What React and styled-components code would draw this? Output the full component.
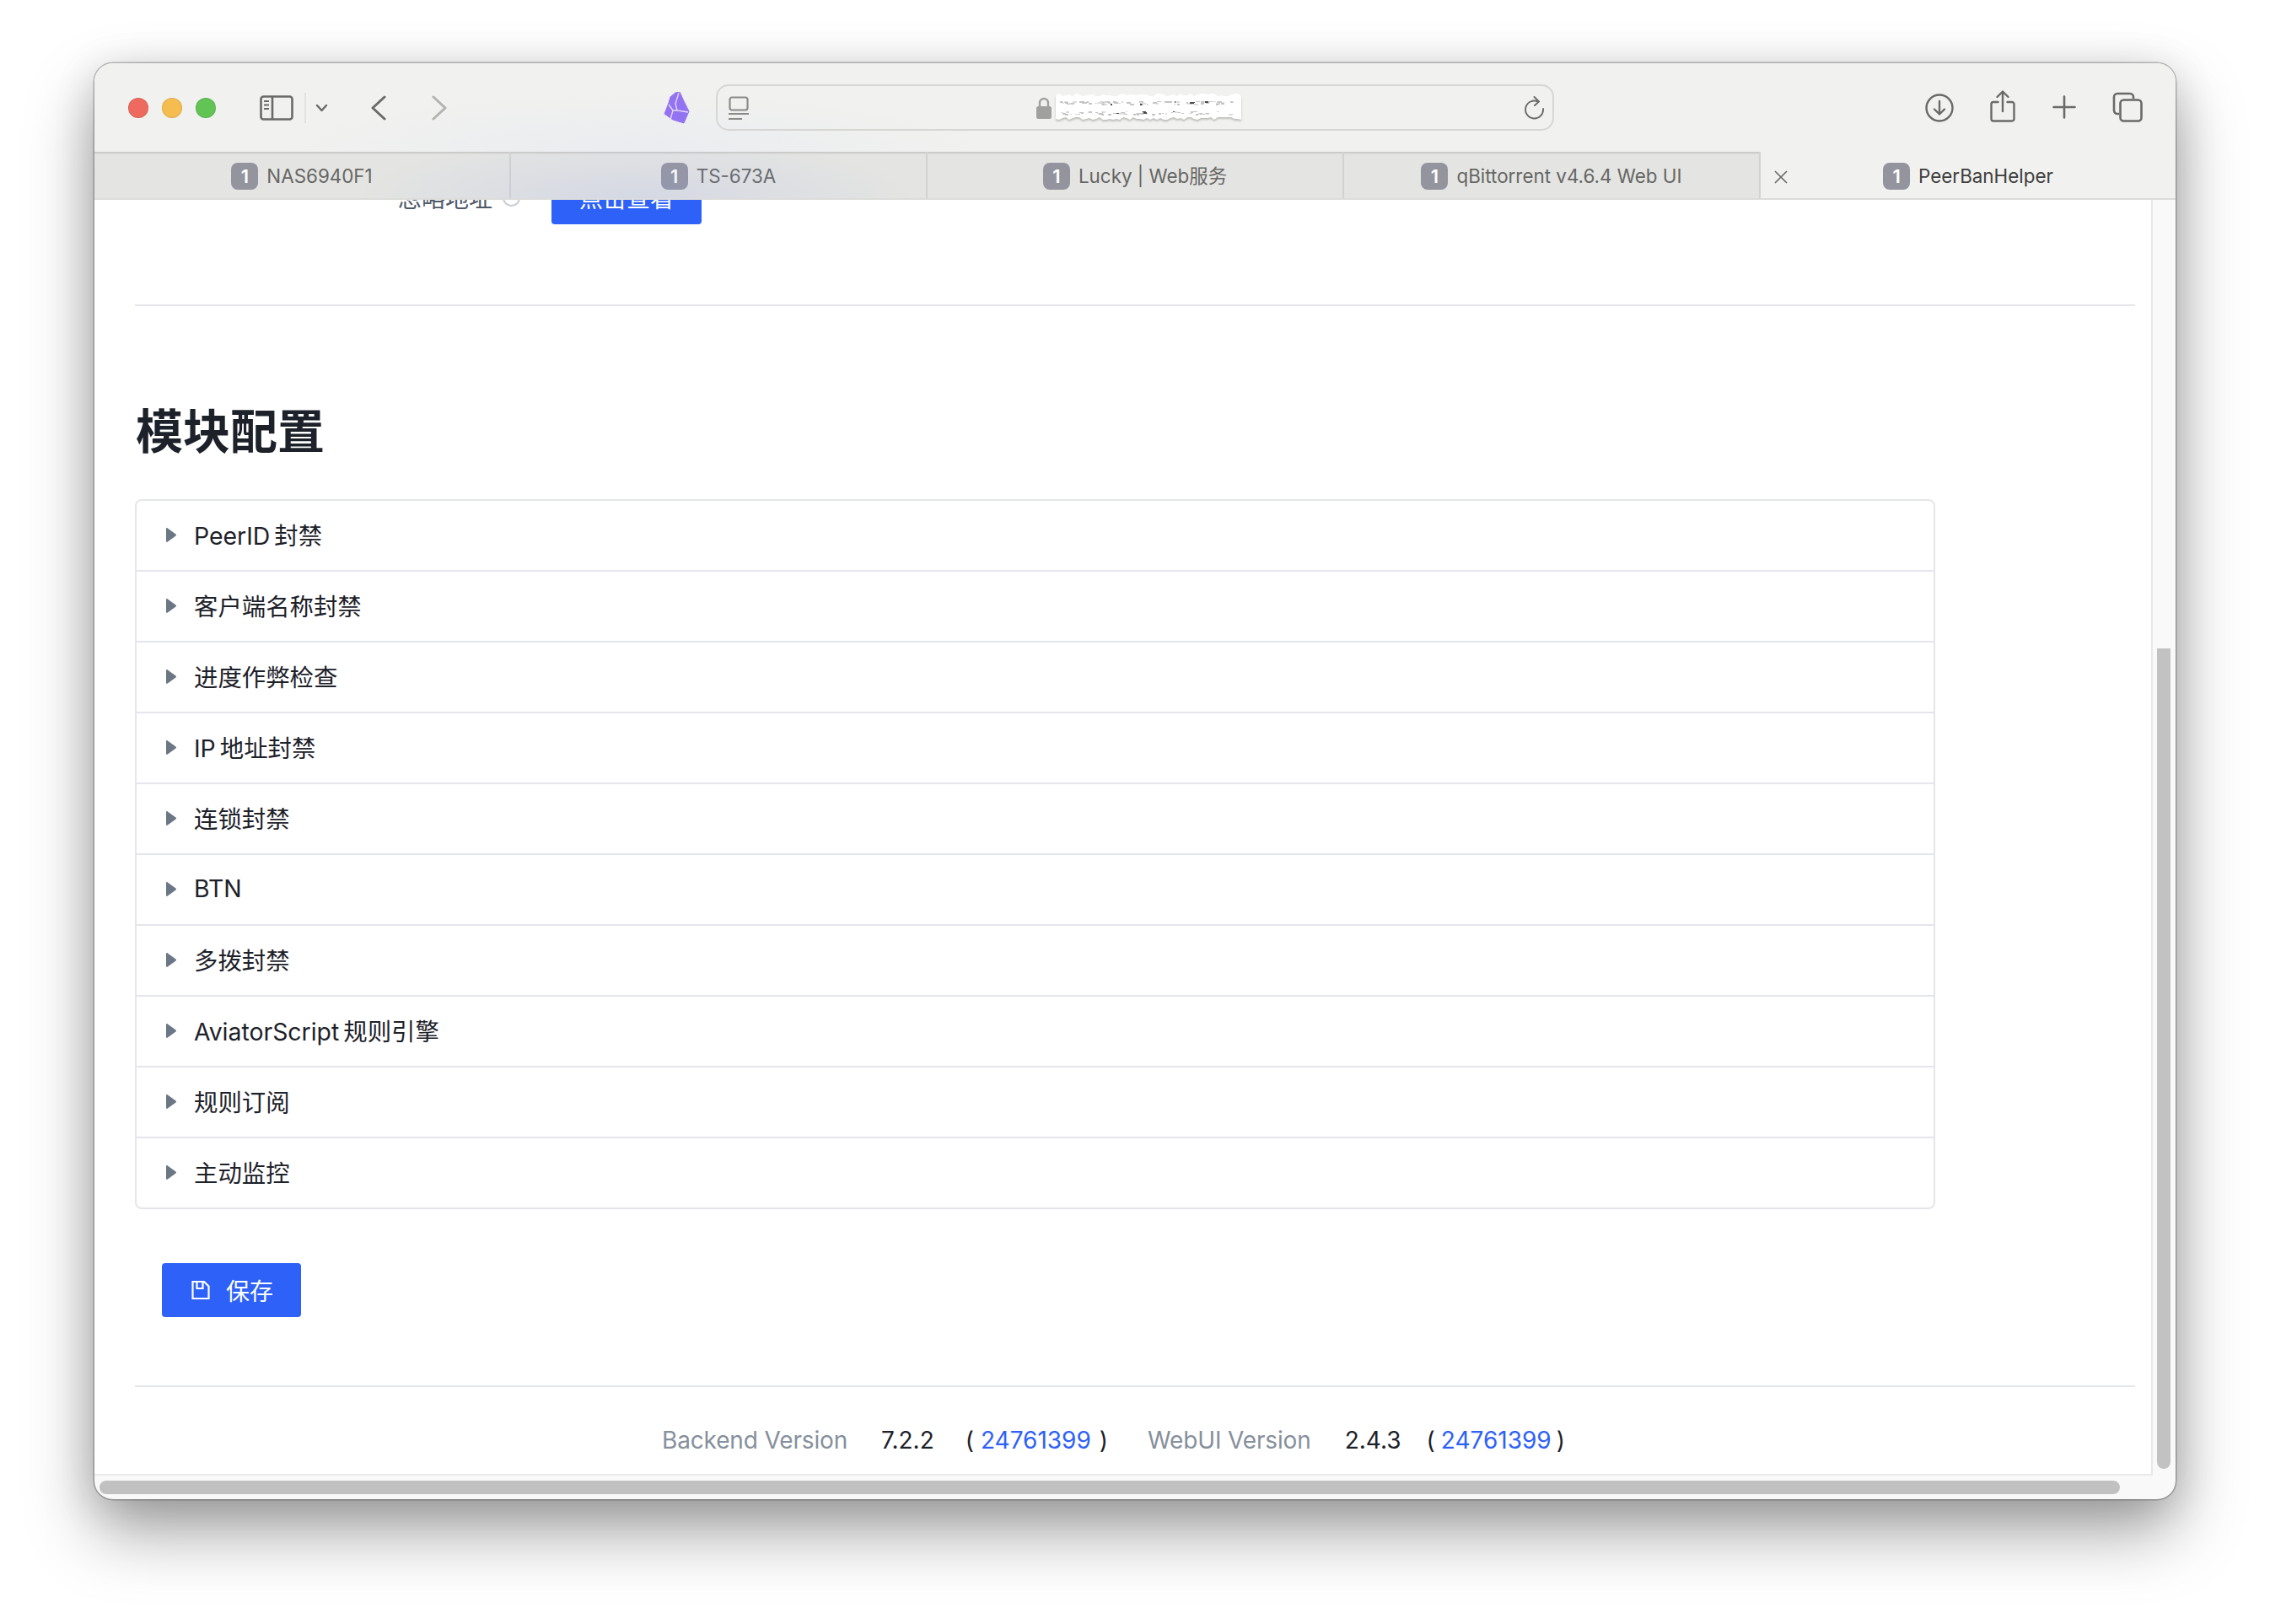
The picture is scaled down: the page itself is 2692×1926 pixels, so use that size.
import React from "react";
import styled, { createGlobalStyle } from "styled-components";

const GlobalStyle = createGlobalStyle`
  html, body {
    margin: 0;
    padding: 0;
    width: 2692px;
    height: 1926px;
    overflow: hidden;
    background: #fff;
  }
  * {
    box-sizing: border-box;
  }
`;

const FONT = `Inter, "Noto Sans CJK SC", sans-serif`;
const BLUE = "#2d61f8";
const ICON = "#6a6a68";

const Page = styled.div`
  width: 2692px;
  height: 1926px;
  padding: 75px 0 0 112px;
  font-family: ${FONT};
`;

const Window = styled.div`
  width: 2468px;
  height: 1703px;
  display: flex;
  flex-direction: column;
  border-radius: 22px;
  overflow: hidden;
  background: #f9f9f9;
  box-shadow: 0 0 0 1.5px rgba(0, 0, 0, 0.24), 0 38px 80px rgba(0, 0, 0, 0.36),
    0 8px 50px rgba(0, 0, 0, 0.14);
`;

// toolbar
const Toolbar = styled.div`
  height: 105px;
  flex: none;
  display: flex;
  align-items: center;
  padding-left: 40px;
  background: radial-gradient(ellipse 420px 70px at 640px 105px, #eaecf0, #f1f1ef00),
    #f1f1ef;
`;

const Lights = styled.div`
  display: flex;
  gap: 16px;
  margin-top: 1px;
`;

const Light = styled.span`
  width: 24px;
  height: 24px;
  border-radius: 50%;
  background: ${(p) => p.$color};
  box-shadow: inset 0 0 0 1px rgba(0, 0, 0, 0.1);
`;

const Tool = styled.div`
  flex: none;
  display: flex;
  margin-left: ${(p) => p.$ml || 0}px;
  margin-top: ${(p) => p.$mt || 0}px;
  svg {
    display: block;
  }
`;

const Divider = styled.div`
  width: 2px;
  height: 36px;
  margin-left: 13px;
  background: #e2e2e0;
`;

const AddressBar = styled.div`
  width: 994px;
  height: 55px;
  margin: 0 0 0 31px;
  padding: 0 9px 0 13px;
  display: flex;
  align-items: center;
  border: 2.5px solid #d6d6d4;
  border-radius: 15px;
`;

const AddressCenter = styled.div`
  margin-left: 341px;
  display: flex;
  align-items: center;
  gap: 5px;
`;

const UrlSvg = styled.svg`
  display: block;
  filter: drop-shadow(0 2px 1px rgba(0, 0, 0, 0.22));
`;

const Reload = styled.div`
  margin-left: auto;
  display: flex;
`;

// tabs
const TabBar = styled.div`
  height: 57px;
  flex: none;
  position: relative;
  display: flex;
  background: #f1f1ef;
  border-bottom: 2px solid #dcdcda;
  &::after {
    content: "";
    position: absolute;
    inset: 0;
    pointer-events: none;
    background: radial-gradient(ellipse 330px 70px at 640px 100%, rgba(150, 170, 235, 0.2), rgba(150, 170, 235, 0));
  }
`;

const Tab = styled.div`
  flex: 1 1 0;
  position: relative;
  display: flex;
  align-items: center;
  justify-content: center;
  gap: 10px;
  padding-top: 2px;
  font-size: 22.4px;
  line-height: 30px;
  color: ${(p) => (p.$active ? "#3e3e3e" : "#666664")};
  background: ${(p) => (p.$active ? "transparent" : "#e4e4e2")};
  border-right: ${(p) => (p.$active ? "none" : "2px solid #d2d2d0")};
  box-shadow: ${(p) => (p.$active ? "none" : "inset 0 3px 3px -2px rgba(0, 0, 0, 0.2)")};
`;

const Badge = styled.span`
  width: 32px;
  height: 32px;
  display: flex;
  align-items: center;
  justify-content: center;
  border-radius: 8px;
  background: #94949f;
  color: #fff;
  font-size: 22px;
  font-weight: 600;
`;

const TabClose = styled.div`
  position: absolute;
  left: 16px;
  top: 22px;
  display: flex;
`;

// page body
const Body = styled.div`
  flex: 1;
  min-height: 0;
  display: flex;
  flex-direction: column;
`;

const Upper = styled.div`
  height: 1513px;
  flex: none;
  display: flex;
`;

const Viewport = styled.div`
  width: 2441px;
  flex: none;
  overflow: hidden;
  padding: 0 19px 0 48px;
  background: #fff;
  border-right: 2px solid #e8e8e8;
  border-bottom: 2px solid #e8e8e8;
  color: #1d2129;
`;

const ClippedRow = styled.div`
  display: flex;
  align-items: center;
  margin-top: -35px;
  padding-left: 312px;
  font-size: 28px;
  color: #4e5969;
`;

const InfoDot = styled.span`
  width: 21px;
  height: 21px;
  margin: 0 36px 0 12px;
  border-radius: 50%;
  border: 2px solid #c9cdd4;
`;

const ViewButton = styled.div`
  width: 178px;
  height: 64px;
  margin-left: 1px;
  display: flex;
  align-items: center;
  justify-content: center;
  border-radius: 4px;
  background: ${BLUE};
  color: #fff;
`;

const Rule = styled.div`
  height: 2px;
  background: #e5e6eb;
  margin-top: ${(p) => p.$mt}px;
`;

const Heading = styled.h2`
  margin: 110px 0 41px 1px;
  font-size: 56px;
  line-height: 78px;
  font-weight: 700;
  color: #1d2129;
`;

const Accordion = styled.div`
  width: 2135px;
  border: 2px solid #e5e6eb;
  border-radius: 8px;
`;

const Row = styled.div`
  height: ${(p) => (p.$first ? 82 : 84)}px;
  display: flex;
  align-items: center;
  padding-left: 35px;
  font-size: 28.4px;
  word-spacing: -3px;
  color: #1d2129;
  border-top: ${(p) => (p.$first ? "none" : "2px solid #e5e6eb")};
`;

const RowLabel = styled.span`
  margin-top: -3px;
`;

const RowArrow = styled.svg`
  width: 12px;
  height: 17px;
  margin: -2px 21px 0 0;
  fill: #6b7785;
`;

const SaveButton = styled.div`
  width: 165px;
  height: 64px;
  margin: 64px 0 0 32px;
  display: flex;
  align-items: center;
  padding-left: 35px;
  gap: 19px;
  border-radius: 4px;
  background: ${BLUE};
  color: #fff;
  font-size: 28px;
`;

const Footer = styled.div`
  height: 54px;
  margin-top: 36px;
  display: flex;
  align-items: center;
  padding-left: 625px;
  font-size: 28px;
  white-space: nowrap;
`;

const FooterLabel = styled.span`
  color: #86909c;
  letter-spacing: -0.15px;
  margin-left: ${(p) => p.$ml || 0}px;
`;

const FooterValue = styled.span`
  color: #1d2129;
  margin-left: ${(p) => p.$ml || 0}px;
`;

const FooterLink = styled.span`
  color: ${BLUE};
  margin-left: ${(p) => p.$ml || 0}px;
`;

// scrollbars
const VTrack = styled.div`
  flex: 1;
  padding: 532px 0 0 5px;
`;

const VThumb = styled.div`
  width: 16px;
  height: 973px;
  border-radius: 0 0 8px 8px;
  background: #c2c2c2;
`;

const HTrack = styled.div`
  flex: 1;
  padding: 6px 0 0 6px;
`;

const HThumb = styled.div`
  width: 2396px;
  height: 16px;
  border-radius: 8px;
  background: #c1c1c1;
`;

function SidebarIcon() {
  return (
    <svg width="40" height="30" viewBox="0 0 40 30" fill="none" stroke={ICON} strokeWidth="2.6">
      <rect x="1.5" y="1.5" width="37" height="27" rx="3" />
      <path d="M15 1.5v27" />
      <path d="M5 7h6M5 11.5h6M5 16h6" strokeWidth="2" />
    </svg>
  );
}

function ObsidianLogo() {
  return (
    <svg width="31" height="38" viewBox="0 0 31 38">
      <path
        d="M14 1 19 0 24 11 30 23 27 30 24 37 11 33 1 26 6 13 8 6Z"
        fill="#9473f2"
        stroke="#9473f2"
        strokeWidth="1"
        strokeLinejoin="round"
      />
      <path
        d="M18 1 14 14 16 22 29 24M6 15 11 22 8 33M11 22 16 22"
        fill="none"
        stroke="#e4dcfb"
        strokeWidth="1.3"
      />
    </svg>
  );
}

function ReaderIcon() {
  return (
    <svg width="24" height="28" viewBox="0 0 24 28" fill="none" stroke="#8a8a88" strokeWidth="2.2">
      <rect x="1.5" y="1.5" width="21" height="15" rx="2.5" />
      <path d="M0 21h24M0 27h16" />
    </svg>
  );
}

function LockIcon() {
  return (
    <svg width="18" height="26" viewBox="0 0 18 26">
      <path d="M4 12V7a5 5 0 0 1 10 0v5" fill="none" stroke="#a0a09e" strokeWidth="2.4" />
      <rect x="0" y="11" width="18" height="15" rx="2.5" fill="#a0a09e" />
    </svg>
  );
}

// the address in the picture is smeared out, a seeded speckle stands in for it
function makeSmear() {
  let seed = 71;
  const next = (n) => {
    seed = (seed * 137 + 59) % 2039;
    return seed % n;
  };
  const top = [];
  const bottom = [];
  for (let x = 0; x <= 220; x += 4) {
    top.push(`${x},${next(4)}`);
    bottom.unshift(`${x},${28 + next(4)}`);
  }
  const dots = [];
  for (let i = 0; i < 170; i++) {
    const dark = next(11) === 0;
    dots.push({
      x: 4 + next(210),
      y: (next(2) ? 21 : 9) + next(4),
      w: 2 + next(4),
      h: 1 + next(2),
      fill: dark ? "#4a4a4a" : next(2) ? "#c4c4c4" : "#dcdcdc",
    });
  }
  return { outline: [...top, ...bottom].join(" "), dots };
}

const SMEAR = makeSmear();

function UrlSmear() {
  return (
    <UrlSvg width="221" height="34" viewBox="0 0 221 34">
      <polygon points={SMEAR.outline} fill="#fff" />
      {SMEAR.dots.map((d, i) => (
        <rect key={i} x={d.x} y={d.y} width={d.w} height={d.h} fill={d.fill} />
      ))}
    </UrlSvg>
  );
}

function ReloadIcon() {
  return (
    <svg width="24" height="28" viewBox="0 0 24 28" fill="none" stroke={ICON} strokeWidth="1.9" strokeLinecap="round">
      <path d="M16 6.5A10.5 10.5 0 1 0 22 15" />
      <path d="M11.5 1 17 6.5 12 11" />
    </svg>
  );
}

function DownloadIcon() {
  return (
    <svg width="34" height="34" viewBox="0 0 34 34" fill="none" stroke={ICON} strokeWidth="2.4" strokeLinecap="round" strokeLinejoin="round">
      <circle cx="17" cy="17" r="15.5" />
      <path d="M17 9v15M11 18.5 17 24.5 23 18.5" />
    </svg>
  );
}

function ShareIcon() {
  return (
    <svg width="30" height="38" viewBox="0 0 30 38" fill="none" stroke={ICON} strokeWidth="2.4" strokeLinecap="round" strokeLinejoin="round">
      <path d="M9.5 14H4a2.5 2.5 0 0 0-2.500 2.500v17.500A2.500 2.500 0 0 0 4 36.500h22a2.500 2.500 0 0 0 2.500-2.500V16.500A2.500 2.500 0 0 0 26 14h-5.500" />
      <path d="M15 25V2M8.500 8 15 1.500 21.500 8" />
    </svg>
  );
}

function PlusIcon() {
  return (
    <svg width="28" height="28" viewBox="0 0 28 28" fill="none" stroke={ICON} strokeWidth="2.6" strokeLinecap="round">
      <path d="M14 1.500v25M1.500 14h25" />
    </svg>
  );
}

function TabsIcon() {
  return (
    <svg width="36" height="36" viewBox="0 0 36 36" fill="none" stroke={ICON} strokeWidth="2.6">
      <path d="M8 26H6a4 4 0 0 1-4-4V6a4 4 0 0 1 4-4h15a4 4 0 0 1 4 4v2" />
      <rect x="9.500" y="9.500" width="25" height="25" rx="4" />
    </svg>
  );
}

function CloseIcon() {
  return (
    <svg width="16" height="16" viewBox="0 0 16 16" fill="none" stroke="#6a6a68" strokeWidth="1.7">
      <path d="M1 1 15 15M15 1 1 15" />
    </svg>
  );
}

function SaveIcon() {
  return (
    <svg width="22" height="24" viewBox="0 0 22 24" fill="none" stroke="#fff" strokeWidth="2.2">
      <path d="M1.500 2h13.500l5.500 5.500V22h-19Z" />
      <path d="M6.500 2v8h7V2" />
    </svg>
  );
}

const TABS = ["NAS6940F1", "TS-673A", "Lucky | Web服务", "qBittorrent v4.6.4 Web UI", "PeerBanHelper"];
const MODULES = [
  "PeerID 封禁",
  "客户端名称封禁",
  "进度作弊检查",
  "IP 地址封禁",
  "连锁封禁",
  "BTN",
  "多拨封禁",
  "AviatorScript 规则引擎",
  "规则订阅",
  "主动监控",
];

export default function App() {
  return (
    <Page>
      <GlobalStyle />
      <Window>
        <Toolbar>
          <Lights>
            <Light $color="#ee6a5f" />
            <Light $color="#f5bd4f" />
            <Light $color="#61c454" />
          </Lights>
          <Tool $ml={52}>
            <SidebarIcon />
          </Tool>
          <Divider />
          <Tool $ml={11}>
            <svg width="15" height="10" viewBox="0 0 15 10" fill="none" stroke={ICON} strokeWidth="2.4" strokeLinecap="round" strokeLinejoin="round">
              <path d="M2 2 7.500 8 13 2" />
            </svg>
          </Tool>
          <Tool $ml={51}>
            <svg width="18" height="30" viewBox="0 0 18 30" fill="none" stroke={ICON} strokeWidth="3" strokeLinecap="round" strokeLinejoin="round">
              <path d="M16 2 2 15 16 28" />
            </svg>
          </Tool>
          <Tool $ml={54}>
            <svg width="18" height="30" viewBox="0 0 18 30" fill="none" stroke="#b2b2b0" strokeWidth="3" strokeLinecap="round" strokeLinejoin="round">
              <path d="M2 2 16 15 2 28" />
            </svg>
          </Tool>
          <Tool $ml={257}>
            <ObsidianLogo />
          </Tool>
          <AddressBar>
            <ReaderIcon />
            <AddressCenter>
              <LockIcon />
              <UrlSmear />
            </AddressCenter>
            <Reload>
              <ReloadIcon />
            </Reload>
          </AddressBar>
          <Tool $ml={440}>
            <DownloadIcon />
          </Tool>
          <Tool $ml={43} $mt={-4}>
            <ShareIcon />
          </Tool>
          <Tool $ml={44} $mt={-2}>
            <PlusIcon />
          </Tool>
          <Tool $ml={43} $mt={-1}>
            <TabsIcon />
          </Tool>
        </Toolbar>

        <TabBar>
          {TABS.map((name, i) => (
            <Tab key={name} $active={i === 4}>
              {i === 4 && (
                <TabClose>
                  <CloseIcon />
                </TabClose>
              )}
              <Badge>1</Badge>
              {name}
            </Tab>
          ))}
        </TabBar>

        <Body>
          <Upper>
            <Viewport>
              <ClippedRow>
                忽略地址
                <InfoDot />
                <ViewButton>点击查看</ViewButton>
              </ClippedRow>
              <Rule $mt={95} />
              <Heading>模块配置</Heading>
              <Accordion>
                {MODULES.map((name, i) => (
                  <Row key={name} $first={i === 0}>
                    <RowArrow viewBox="0 0 12 17">
                      <path d="M0 1.200C0 .2 1 -.3 1.800 .4L11.500 7.600C12.100 8.100 12.100 8.900 11.500 9.400L1.800 16.600C1 17.300 0 16.800 0 15.800Z" />
                    </RowArrow>
                    <RowLabel>{name}</RowLabel>
                  </Row>
                ))}
              </Accordion>
              <SaveButton>
                <SaveIcon />
                保存
              </SaveButton>
              <Rule $mt={81} />
              <Footer>
                <FooterLabel>Backend Version</FooterLabel>
                <FooterValue $ml={40}>7.2.2</FooterValue>
                <FooterValue $ml={37}>(</FooterValue>
                <FooterLink $ml={8}>24761399</FooterLink>
                <FooterValue $ml={10}>)</FooterValue>
                <FooterLabel $ml={47}>WebUI Version</FooterLabel>
                <FooterValue $ml={40}>2.4.3</FooterValue>
                <FooterValue $ml={30}>(</FooterValue>
                <FooterLink $ml={7}>24761399</FooterLink>
                <FooterValue $ml={6}>)</FooterValue>
              </Footer>
            </Viewport>
            <VTrack>
              <VThumb />
            </VTrack>
          </Upper>
          <HTrack>
            <HThumb />
          </HTrack>
        </Body>
      </Window>
    </Page>
  );
}
